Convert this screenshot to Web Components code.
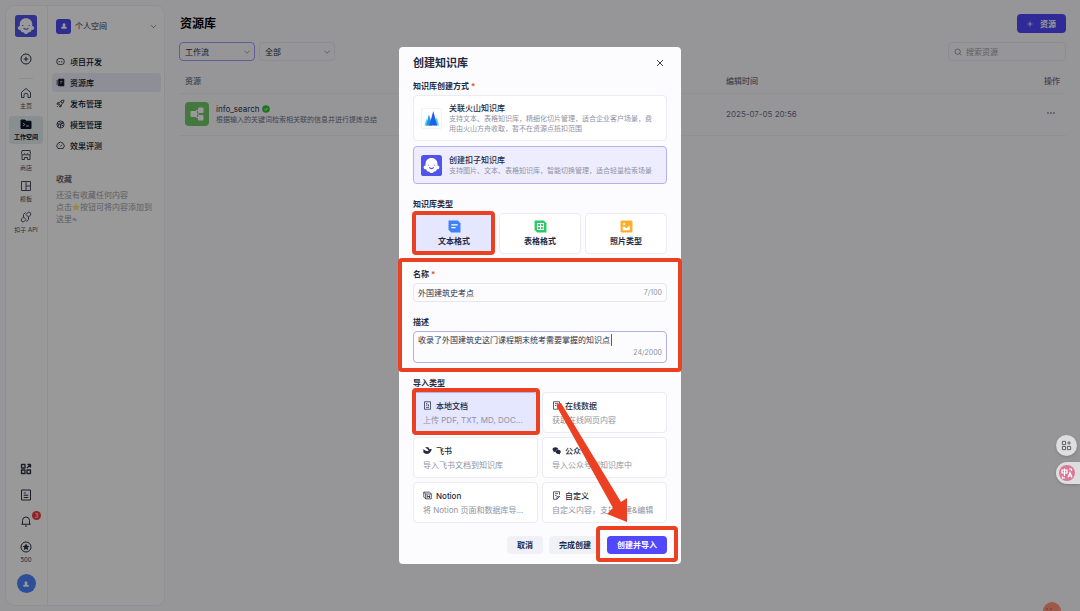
<!DOCTYPE html>
<html lang="zh-CN">
<head>
<meta charset="utf-8">
<meta name="viewport" content="width=device-width, initial-scale=1">
<title>资源库</title>
<style>
  html, body { margin: 0; min-height: 100vh; }
  body {
    background: #fbfbff;
    color: #0f1528;
    font-family: Inter, "Noto Sans CJK SC", sans-serif;
    font-size: 8px;
    line-height: 12px;
    overflow: hidden;
    --brand: #5147ff;
    --line: #e9e9f2;
    --muted: #6b7085;
    --faint: #9a9dac;
  }
</style>
</head>
<body>
<app-shell>
  <app-rail slot="rail"></app-rail>
  <side-nav slot="nav"></side-nav>
  <resource-page></resource-page>
</app-shell>
<kb-dialog></kb-dialog>
<float-tools></float-tools>

<script>
const ICONS = {
  plusCircle: '<circle cx="12" cy="12" r="10"/><path d="M12 7.5v9M7.5 12h9"/>',
  home: '<path d="M3 10.5 12 3l9 7.5V21h-5v-4.500a4 4 0 0 0-8 0V21H3z"/>',
  folder: '<path fill="currentColor" d="M2 4h8l2 2.500h10V21H2z"/><path stroke="#e6f0f1" d="m6.500 10 3 3-3 3M12.500 16h5"/>',
  store: '<path d="M4 3h16l1 6a3 3 0 0 1-6 0 3 3 0 0 1-6 0 3 3 0 0 1-6 0zM4 12v9h5v-4h6v4h5v-9"/>',
  template: '<path d="M3 3h18v18H3zM12 3v18M12 12h9"/>',
  api: '<path d="m12 7 3-3.500a3.500 3.500 0 0 1 5.500 5L17 12zM12 17l-3 3.500a3.500 3.500 0 0 1-5.500-5L7 12zM11 3.500h-1L7 7v5M13 20.500h1l3-3.500v-5"/>',
  grid: '<path stroke-width="2.600" d="M3 3h7v7H3zM3 14h7v7H3zM14 14h7v7h-7zM14 10l7-7M15 3h6v6"/>',
  doc: '<path d="M3 2h18v20H3zM7.500 8h4M7.500 12.500h9M7.500 17h9"/>',
  bell: '<path d="M2.500 18.500h19M5 18v-7a7 7 0 0 1 14 0v7M10 22h4"/>',
  star: '<circle cx="12" cy="12" r="10"/><path fill="currentColor" d="m12 7 1.600 3.200 3.500.500-2.500 2.500.600 3.500-3.200-1.700-3.200 1.700.600-3.500-2.500-2.500 3.500-.500z"/>',
  person: '<g fill="currentColor" stroke="none"><circle cx="12" cy="8" r="4.500"/><path d="M9.500 11h5l1 3H20v6H4v-6h4.500z"/></g>',
  bot: '<rect x="2" y="4" width="20" height="16" rx="7"/><path stroke-width="2.600" d="M8.500 11v3M15.500 11v3"/>',
  library: '<path fill="currentColor" d="M7 3h14v18H7z"/><path d="M3 5v14"/><path stroke="#ededfb" d="M11 9h6M11 13h4"/>',
  rocket: '<path d="M21 3c-7 0-11 4-14 10l4 4c6-3 10-7 10-14zM8 10H4l-1.500 4H7M14 16v4l-4 1.500V17M3 21l3.500-3.500"/><circle cx="15" cy="9" r="1.500"/>',
  model: '<circle cx="12" cy="12" r="9.500"/><path d="m3 9 9 3 6-7M12 12v9M12 12l8 4M8 10l-3 8M9 3l3 5 8 2"/>',
  gauge: '<path d="M5 20a9.800 9.800 0 1 1 14 0zM12 15l4-5M6.500 13h1M8 8l1 1"/>',
  chevron: '<path d="m4 8 8 8 8-8"/>',
  search: '<circle cx="11" cy="11" r="8"/><path d="m17 17 5 5"/>',
  close: '<path stroke-width="3" d="m3 3 18 18M21 3 3 21"/>',
  plus: '<path stroke-width="3" d="M12 2v20M2 12h20"/>',
  more: '<g fill="currentColor" stroke="none"><circle cx="3" cy="12" r="2"/><circle cx="12" cy="12" r="2"/><circle cx="21" cy="12" r="2"/></g>',
  localDoc: '<path d="M4 2h16v20H4zM8 7h3M8 11h3M8 17h8M14 8v5h2"/>',
  webDoc: '<path d="M20 10V2H4v20h8M8 7h8M8 12h4M20 13l-6 6v3h3l4-4"/>',
  feishu: '<path fill="currentColor" stroke="none" d="M5 3h9c2 2 3 4 3.500 6 2-1 4-1 6 0-2 3-3 7-6 9.500-5 4-12 3-16.500-1V8c4 4 8 6 12 6 1-1 1-2 2-3C13 8 9 6 5 3z"/>',
  wechat: '<g stroke="none" fill="currentColor"><path d="M9 3c5 0 8 3 8 6-5 0-8 3-7 7-1 0-2 0-3-.500L4 17l.500-3C-1 10 1 3 9 3z"/><path d="M16.500 10c4 0 7 2.500 7 5.500 0 2-1 3.500-2.500 4.500l.500 2.500-3-1.500c-5 1-9-2-9-5.500 0-3 3-5.500 7-5.500z"/></g>',
  notion: '<path d="M2 3h15l5 4v14H7l-5-5zM7 8h15M7 8v13M2 3l5 5"/><path stroke-width="2.600" d="M11.500 18v-6l6 6v-6"/>',
  customDoc: '<path d="M20 10V2H4v20h9l7-7v-2M8 7h8M8 12h4M13 22v-7h7"/>',
  text: '<path fill="#3b82f8" stroke="none" d="M1 1h17l5 5v17H6l-5-5z"/><path stroke="#fff" d="M6 9h12M6 14h8"/>',
  table: '<path fill="#2fc866" stroke="none" d="M1 1h17l5 5v17H6l-5-5z"/><path stroke="#fff" d="M6.500 6.500h11v11h-11zM12 6.500v11M6.500 12h11"/>',
  photo: '<rect fill="#fdae2c" stroke="none" x="1" y="1" width="22" height="22" rx="2"/><path fill="#fff" stroke="none" d="M5 19v-6l3-1 4 3 6-5v9z"/><circle fill="#fff" stroke="none" cx="7.500" cy="7.500" r="2"/>',
  logo: '<rect width="24" height="24" rx="3" fill="#5154e8" stroke="none"/><path fill="#fff" stroke="none" d="M12 3.500c4 0 6.800 2.800 6.800 6.500v2c2 .2 2.800 2 1.800 3.300-.6.900-1.600 1.200-2.600 1-.4 2-1.800 3-3.300 2.500-.6 1.300-1.600 1.900-2.700 1.900s-2.100-.6-2.700-1.900c-1.500.5-2.900-.5-3.300-2.500-1 .2-2-.1-2.600-1-1-1.300-.2-3.100 1.800-3.300v-2c0-3.700 2.800-6.500 6.800-6.500z"/><path stroke="#5154e8" stroke-width="1.300" d="M8.500 11v1M15.500 11v1M9.500 14.200c1.200 1.800 3.800 1.800 5 0"/>',
  volcano: '<rect x=".5" y=".5" width="23" height="23" rx="2" fill="#fff" stroke="#f0f0f6" stroke-width="1"/><g stroke="none"><path fill="#43d8d0" d="M4 20 6.500 12l3.500 8zM14.500 20 18 10.500 20.500 20z"/><path fill="#2b8cf0" d="M6 20 9 7.500 13 20z"/><path fill="#1f5eea" d="M9.500 20 14 3.500 18.500 20z"/></g>',
  flow: '<g fill="#fff" stroke="none"><rect x="5.500" y="9" width="6" height="6" rx="1"/><rect x="13" y="5.500" width="5.500" height="5.500" rx="1"/><rect x="13" y="13" width="5.500" height="5.500" rx="1"/></g><path stroke="#fff" stroke-width="1" d="M11 12h3M13 8.500h-1.500v7H13"/>',
  verified: '<circle cx="12" cy="12" r="11.500" fill="#35c23c" stroke="none"/><path stroke="#fff" stroke-width="3" d="m7 12 3.500 3.500L17 9"/>',
  apps: '<path d="M3 3h7v7H3zM3 14h7v7H3zM14 14h7v7h-7zM17.500 2.500v8M13.500 6.500h8"/>'
};
const esc = (s) => s.replace(/&/g, '&amp;').replace(/</g, '&lt;');
const define = (name, render) => customElements.define(name, class extends HTMLElement {
  connectedCallback() {
    if (this.shadowRoot) return;
    const t = document.createElement('template');
    t.innerHTML = '<style>*{box-sizing:border-box}</style>' + render(this);
    this.attachShadow({ mode: 'open' }).append(t.content.cloneNode(true));
  }
});

define('ui-icon', (el) => `
  <style>
    :host { display: inline-flex; flex: none; width: var(--size, 10px); height: var(--size, 10px); }
    svg { width: 100%; height: 100%; fill: none; stroke: currentColor; stroke-width: 2; stroke-linejoin: round; }
  </style>
  <svg viewBox="0 0 24 24" aria-hidden="true">${ICONS[el.getAttribute('name')]}</svg>`);

define('ui-button', () => `
  <style>
    :host { display: inline-flex; }
    button {
      display: flex; align-items: center; gap: 7px; height: 18px; padding: 0 10px;
      border: 0; border-radius: 4px; background: #f0f0f7; color: inherit; --size: 6px;
      font: inherit; font-weight: 600; cursor: pointer; white-space: nowrap;
    }
    :host([primary]) button { background: var(--brand); color: #fff; }
    :host([large]) button { height: 19px; }
  </style>
  <button type="button"><slot></slot></button>`);

define('app-shell', () => `
  <style>
    :host { display: flex; min-height: 100vh; padding: 5px; box-sizing: border-box; }
    aside { display: flex; flex: 0 0 160px; background: #fff; border: 1px solid #f0f0f6; border-radius: 9px; }
    main { flex: 1; min-width: 0; }
  </style>
  <aside><slot name="rail"></slot><slot name="nav"></slot></aside>
  <main><slot></slot></main>`);

define('rail-item', (el) => `
  <style>
    :host { display: block; width: 34px; }
    a { display: flex; flex-direction: column; align-items: center; gap: 3px; height: 28px; padding-top: 2px;
        border-radius: 3px; color: #4a4f63; text-decoration: none; font-size: 6px; line-height: 8px; --size: 12px; white-space: nowrap; }
    :host([active]) a { background: #e4eff0; color: #0f1528; font-weight: 600; }
  </style>
  <a href="#"><ui-icon name="${el.getAttribute('icon')}"></ui-icon><slot></slot></a>`);

define('app-rail', () => `
  <style>
    :host { display: flex; flex-direction: column; align-items: center; width: 42px; padding: 9px 1px 12px 0; border-right: 1px solid #f0f0f6; box-sizing: border-box; }
    button { position: relative; display: flex; padding: 0; border: 0; background: none; color: #2c3144; font: inherit; --size: 12px; cursor: pointer; }
    .logo { --size: 22px; }
    .add { margin-top: 16px; }
    hr { width: 14px; height: 1px; margin: 13px 0 6px; border: 0; background: var(--line); }
    nav { display: flex; flex-direction: column; gap: 3px; }
    .tools { display: flex; flex-direction: column; align-items: center; gap: 14px; margin-top: auto; }
    .badge { position: absolute; left: 12px; top: -4px; width: 9px; height: 9px; border-radius: 50%; background: #f0393f; color: #fff; font-size: 6px; line-height: 9px; text-align: center; }
    .points { flex-direction: column; align-items: center; gap: 3px; font-size: 6px; line-height: 8px; }
    .avatar { margin-top: -4px; width: 19px; height: 19px; align-items: center; justify-content: center; border-radius: 50%; background: #4d83ff; color: #fff; --size: 8px; }
  </style>
  <ui-icon class="logo" name="logo"></ui-icon>
  <button class="add" aria-label="新建"><ui-icon name="plusCircle"></ui-icon></button>
  <hr>
  <nav>
    <rail-item icon="home">主页</rail-item>
    <rail-item icon="folder" active>工作空间</rail-item>
    <rail-item icon="store">商店</rail-item>
    <rail-item icon="template">模板</rail-item>
    <rail-item icon="api">扣子 API</rail-item>
  </nav>
  <div class="tools">
    <button aria-label="应用"><ui-icon name="grid"></ui-icon></button>
    <button aria-label="文档"><ui-icon name="doc"></ui-icon></button>
    <button aria-label="通知"><ui-icon name="bell"></ui-icon><span class="badge">3</span></button>
    <button class="points"><ui-icon name="star"></ui-icon>500</button>
    <button class="avatar" aria-label="账号"><ui-icon name="person"></ui-icon></button>
  </div>`);

define('nav-item', (el) => `
  <style>
    :host { display: block; }
    a { display: flex; align-items: center; gap: 5px; height: 19px; padding: 0 4px; border-radius: 4px; color: inherit; text-decoration: none; font-weight: 500; --size: 9px; }
    :host([active]) a { background: #ededfb; }
  </style>
  <a href="#"><ui-icon name="${el.getAttribute('icon')}"></ui-icon><slot></slot></a>`);

define('side-nav', () => `
  <style>
    :host { display: block; flex: 1; min-width: 0; padding: 12px 3px 12px 4px; }
    .space { display: flex; align-items: center; gap: 4px; width: 100%; height: 16px; padding: 0 4px; border: 0; background: none; color: #2c3144; font: inherit; --size: 7px; }
    .space > ui-icon { margin-left: auto; }
    .face { display: grid; place-items: center; width: 15px; height: 15px; border-radius: 3px; background: #4d4af0; color: #fff; --size: 8px; }
    nav { display: grid; gap: 2px; margin-top: 18px; }
    h2 { margin: 18px 4px 4px; font-size: 8px; line-height: 12px; font-weight: 500; color: #4a4f63; }
    p { margin: 0 4px; color: var(--faint); white-space: nowrap; }
    .star { display: inline-block; width: 8px; height: 8px; background: #ffe07a; vertical-align: -1px;
      clip-path: polygon(50% 0, 65% 33%, 100% 38%, 74% 62%, 81% 98%, 50% 80%, 19% 98%, 26% 62%, 0 38%, 35% 33%); }
  </style>
  <button class="space"><span class="face"><ui-icon name="person"></ui-icon></span>个人空间<ui-icon name="chevron"></ui-icon></button>
  <nav>
    <nav-item icon="bot">项目开发</nav-item>
    <nav-item icon="library" active>资源库</nav-item>
    <nav-item icon="rocket">发布管理</nav-item>
    <nav-item icon="model">模型管理</nav-item>
    <nav-item icon="gauge">效果评测</nav-item>
  </nav>
  <h2>收藏</h2>
  <p>还没有收藏任何内容<br>点击<span class="star"></span>按钮可将内容添加到<br>这里~</p>`);

define('filter-select', (el) => `
  <style>
    :host { display: block; position: relative; width: 76px; }
    select { display: block; appearance: none; width: 100%; height: 19px; padding: 0 5px; border: 1px solid var(--line); border-radius: 4px; background: transparent; color: #2c3144; font: inherit; }
    :host([current]) select { border-color: #a39cff; }
    ui-icon { position: absolute; right: 4px; top: 6px; --size: 8px; color: var(--muted); pointer-events: none; }
  </style>
  <select aria-label="${el.getAttribute('label')}"><option>${el.getAttribute('value')}</option></select>
  <ui-icon name="chevron"></ui-icon>`);

define('resource-page', () => `
  <style>
    :host { display: block; padding: 9px 9px 0 14px; }
    header, .filters { display: flex; align-items: center; }
    header { justify-content: space-between; height: 19px; }
    h1 { margin: 0; font-size: 12px; line-height: 18px; font-weight: 600; color: #000; padding-left: 1px; }
    .filters { gap: 4px; margin-top: 9px; }
    .search { display: flex; align-items: center; gap: 4px; flex: 0 1 118px; min-width: 0; height: 19px; margin-left: auto; padding: 0 5px; border: 1px solid var(--line); border-radius: 4px; color: var(--muted); --size: 8px; }
    input { min-width: 0; width: 100%; flex: 1; padding: 0; border: 0; outline: 0; background: none; font: inherit; }
    input::placeholder { color: var(--faint); opacity: 1; }
    table { width: 100%; margin-top: 8px; border-collapse: collapse; table-layout: fixed; }
    th, td { padding: 0 6px; border-bottom: 1px solid #f0f0f6; text-align: left; font-weight: 400; color: var(--muted); }
    th { height: 24px; font-weight: 500; }
    td { height: 42px; }
    .end { width: 12%; text-align: right; }
    .when { width: 27%; }
    .end button { padding: 0 5px; border: 0; background: none; font: inherit; color: #2c3144; --size: 8px; vertical-align: middle; }
    .item { display: flex; align-items: center; gap: 7px; }
    .thumb { display: flex; border-radius: 4px; background: #72c868; --size: 24px; }
    .name { display: flex; align-items: center; gap: 3px; color: #2c3144; --size: 8px; }
    .desc { font-size: 7px; line-height: 10px; }
  </style>
  <header><h1>资源库</h1><ui-button primary large><ui-icon name="plus"></ui-icon><span>资源</span></ui-button></header>
  <div class="filters">
    <filter-select label="资源类型" value="工作流" current></filter-select>
    <filter-select label="筛选" value="全部"></filter-select>
    <label class="search"><ui-icon name="search"></ui-icon><input type="search" aria-label="搜索资源" placeholder="搜索资源"></label>
  </div>
  <table>
    <thead><tr><th>资源</th><th class="when">编辑时间</th><th class="end">操作</th></tr></thead>
    <tbody><tr>
      <td><div class="item"><span class="thumb"><ui-icon name="flow"></ui-icon></span>
        <div><div class="name">info_search<ui-icon name="verified"></ui-icon></div><div class="desc">根据输入的关键词检索相关联的信息并进行提炼总结</div></div></div></td>
      <td>2025-07-05 20:56</td>
      <td class="end"><button aria-label="更多"><ui-icon name="more"></ui-icon></button></td>
    </tr></tbody>
  </table>`);

const CHOICES = {
  method: { label: '知识库创建方式', items: [
    ['volcano', '关联火山知识库', '支持文本、表格知识库，精细化切片管理，适合企业客户场景，费用由火山方舟收取，暂不在资源点抵扣范围'],
    ['logo', '创建扣子知识库', '支持图片、文本、表格知识库，智能切换管理，适合轻量检索场景']] },
  type: { label: '知识库类型', items: [['text', '文本格式'], ['table', '表格格式'], ['photo', '照片类型']] },
  source: { label: '导入类型', items: [
    ['localDoc', '本地文档', '上传 PDF, TXT, MD, DOC...'],
    ['webDoc', '在线数据', '获取在线网页内容'],
    ['feishu', '飞书', '导入飞书文档到知识库'],
    ['wechat', '公众号', '导入公众号到知识库中'],
    ['notion', 'Notion', '将 Notion 页面和数据库导...'],
    ['customDoc', '自定义', '自定义内容，支持创建&编辑']] }
};

define('choice-group', (el) => {
  const kind = el.getAttribute('kind');
  const chosen = Number(el.getAttribute('chosen') || 0);
  const { label, items } = CHOICES[kind];
  return `
  <style>
    :host { display: block; }
    .group { display: grid; gap: 5px; }
    label { display: grid; align-items: center; min-width: 0; border: 1px solid #ebebf3; border-radius: 4px; background: #fff; cursor: pointer; }
    label:has(:checked) { background: #e5e6ff; border-color: #b6b1ee; }
    input { position: absolute; opacity: 0; width: 1px; height: 1px; margin: 0; }
    b { font-weight: 500; }
    small { font-size: 8px; color: #8f92a2; overflow: hidden; white-space: nowrap; }
    .method label { grid-template-columns: 21px 1fr; gap: 7px; min-height: 38px; padding: 6px 12px 6px 7px; --size: 21px; }
    .method label:has(:checked) { background: #ededff; }
    .method b { display: block; }
    .method small { display: block; font-size: 7px; line-height: 10px; white-space: normal; }
    .type { grid-template-columns: repeat(3, 1fr); gap: 4px; }
    .type label { justify-items: center; align-content: center; gap: 2px; height: 41px; --size: 13px; }
    .type b { font-weight: 600; }
    .source { grid-template-columns: 1fr 1fr; gap: 4px; }
    .source label { grid-template-columns: 8px 1fr; align-content: center; gap: 2px 5px; height: 41px; padding: 0 9px; --size: 9px; }
    .source small { grid-column: 1 / -1; }
  </style>
  <div class="group ${kind}" role="radiogroup" aria-label="${label}">
    ${items.map(([icon, name, note], i) => {
      const body = kind === 'method'
        ? `<span><b>${name}</b><small>${note}</small></span>`
        : `<b>${name}</b>${note ? `<small>${esc(note)}</small>` : ''}`;
      return `<label><input type="radio" name="${kind}" ${i === chosen ? 'checked' : ''}><ui-icon name="${icon}"></ui-icon>${body}</label>`;
    }).join('')}
  </div>`;
});

define('form-section', (el) => `
  <style>
    :host { display: block; }
    .caption { height: 14px; margin-bottom: 2px; line-height: 14px; font-weight: 600; }
    i { color: #eb4122; font-style: normal; }
  </style>
  <div class="caption"><slot name="caption"></slot>${el.hasAttribute('required') ? ' <i>*</i>' : ''}</div>
  <slot></slot>`);

define('guide-marks', () => `
  <style>
    :host { position: absolute; inset: 0; pointer-events: none; }
    svg { display: block; width: 100%; height: 100%; overflow: visible; fill: none; stroke: #eb4122; stroke-width: 4; stroke-linejoin: round; }
  </style>
  <svg viewBox="0 0 282 517" preserveAspectRatio="xMidYMin meet" aria-hidden="true">
    <rect x="15" y="166" width="79" height="40" rx="2"/>
    <rect x="1" y="213" width="280" height="110" rx="2"/>
    <rect x="15" y="343" width="124" height="43" rx="2"/>
    <rect x="199" y="481" width="78" height="32" rx="2"/>
    <path fill="#eb4122" stroke="none" d="M158 360q-1-4 4-4L222 455l6-4v24l-20-8 6-6z"/>
  </svg>`);

define('kb-dialog', () => `
  <style>
    :host { position: fixed; inset: 0; display: flex; align-items: center; justify-content: center; background: rgba(0, 0, 0, .4); }
    section { position: relative; width: 282px; max-width: 100%; padding: 0 14px 10px; border-radius: 4px; background: #fcfcff; color: #242940; }
    header { display: flex; align-items: center; justify-content: space-between; height: 32px; padding-right: 3px; }
    h2 { margin: 0; font-size: 11px; line-height: 16px; font-weight: 600; }
    header button { display: flex; padding: 0; border: 0; background: none; color: #3b4054; --size: 8px; }
    form { display: grid; gap: 13px; }
    .box { position: relative; display: flex; border: 1px solid #e6e6f0; border-radius: 4px; padding: 0 4px; }
    .box:has(textarea) { height: 32px; border-color: #b3b0e6; padding-top: 2px; }
    .box:has(input) { height: 19px; align-items: center; }
    input, textarea { flex: 1; min-width: 0; padding: 0; border: 0; outline: 0; background: none; resize: none; font: inherit; color: #2c3144; }
    textarea { overflow: hidden; height: 12px; }
    output { color: #8f92a2; font-size: 7px; }
    .box:has(textarea) output { position: absolute; right: 4px; bottom: 3px; }
    .caret { position: absolute; left: calc(24em + 5px); top: 2px; width: 1px; height: 12px; background: var(--brand); }
    footer { display: flex; justify-content: flex-end; gap: 6px; margin-top: 13px; }
  </style>
  <section role="dialog" aria-label="创建知识库">
    <header><h2>创建知识库</h2><button aria-label="关闭"><ui-icon name="close"></ui-icon></button></header>
    <form>
      <form-section required><span slot="caption">知识库创建方式</span><choice-group kind="method" chosen="1"></choice-group></form-section>
      <form-section><span slot="caption">知识库类型</span><choice-group kind="type"></choice-group></form-section>
      <form-section required><label slot="caption" for="name">名称</label>
        <div class="box"><input id="name" value="外国建筑史考点"><output for="name">7/100</output></div></form-section>
      <form-section><label slot="caption" for="about">描述</label>
        <div class="box"><textarea id="about" rows="1">收录了外国建筑史这门课程期末统考需要掌握的知识点</textarea><span class="caret"></span><output for="about">24/2000</output></div></form-section>
      <form-section><span slot="caption">导入类型</span><choice-group kind="source"></choice-group></form-section>
    </form>
    <footer><ui-button>取消</ui-button><ui-button>完成创建</ui-button><ui-button primary>创建并导入</ui-button></footer>
    <guide-marks></guide-marks>
  </section>`);

define('float-tools', () => `
  <style>
    :host { position: fixed; right: 0; bottom: 0; display: flex; flex-direction: column; align-items: flex-end; }
    button { display: flex; align-items: center; padding: 0; border: 0; background: #dededf; color: #55575f; box-shadow: 0 1px 3px rgba(0, 0, 0, .2); }
    .apps { justify-content: center; width: 21px; height: 21px; margin: 0 3px 6px; border-radius: 50%; --size: 11px; }
    .lang { width: 24px; height: 22px; padding-left: 3px; border-radius: 11px 0 0 11px; }
    .lang span { display: block; width: 16px; height: 16px; border-radius: 50%; background: #d8799a; color: #fff; }
    .lang svg { display: block; fill: none; stroke: #fff; stroke-width: 1.200; }
    .pet { width: 18px; height: 9px; margin: 118px 19px 0 0; border-radius: 9px 9px 0 0; background: radial-gradient(circle at 4px 7px, #3a2020 0, transparent 1px), radial-gradient(circle at 8px 7px, #3a2020 0, transparent 1px), #9c5a4c; }
  </style>
  <button class="apps" aria-label="工具"><ui-icon name="apps"></ui-icon></button>
  <button class="lang" aria-label="翻译"><span><svg viewBox="0 0 16 16" aria-hidden="true"><path d="M3 5h5v3H3zM5.500 3.500V11M9 12.500l2-5 2 5M9.700 11h2.600M10 4h2.500v2M3.500 11.500V13H6"/></svg></span></button>
  <div class="pet"></div>`);
</script>
</body>
</html>
